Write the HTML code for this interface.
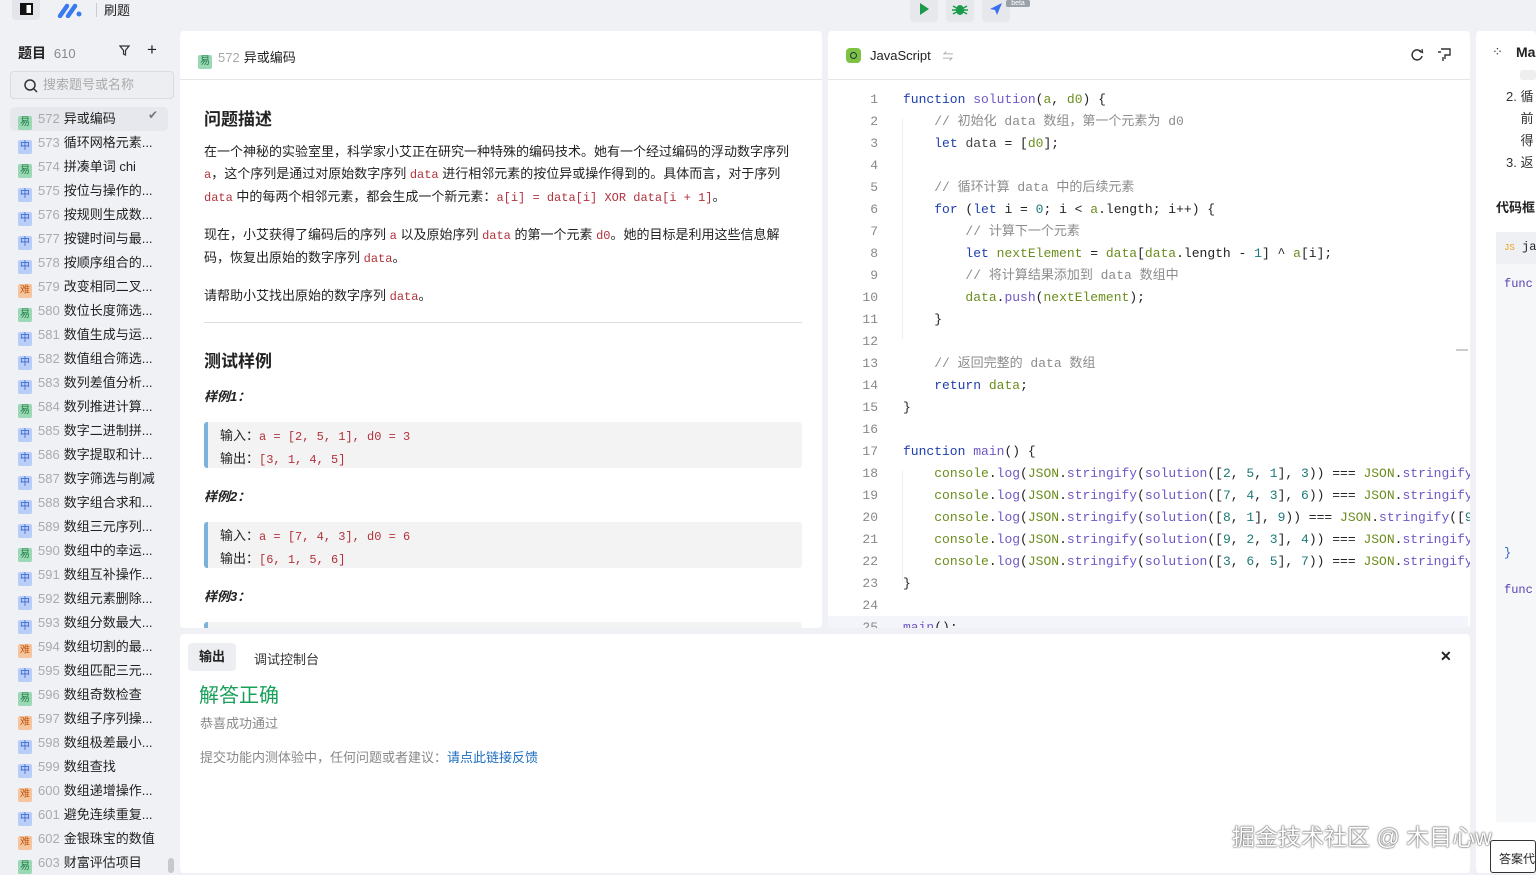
<!DOCTYPE html>
<html><head><meta charset="utf-8"><style>
*{box-sizing:border-box;margin:0;padding:0}
body{width:1536px;height:873px;overflow:hidden;background:#f0f1f5;font-family:"Liberation Sans","Noto Sans CJK SC",sans-serif;color:#222;position:relative}
.abs{position:absolute}
.mono{font-family:"Liberation Mono","Noto Sans CJK SC",monospace}
.row{position:absolute;left:10px;width:160px;height:24px;font-size:13px;line-height:24px;white-space:nowrap}
.tag{display:inline-block;width:14px;height:14px;font-size:10px;line-height:14px;text-align:center;border-radius:2px;margin:0 6px 0 8px;vertical-align:-2px}
.e{background:#9ad9b4;color:#237a4a}.m{background:#b8cdf7;color:#3463c9}.h{background:#f6c59d;color:#c05f18}
.num{color:#aaa;margin-right:4px}
.panel{background:#fff;border-radius:4px}
p.t{font-size:13px;line-height:22px;color:#222}
.r{color:#b2323c;font-family:"Liberation Mono",monospace;font-size:12px}
.ex{position:absolute;left:24px;width:598px;height:46px;background:#f3f3f3;border-left:4px solid #7ab2dc;border-radius:3px;padding:3px 0 0 12px;font-size:13px;line-height:22px}
.code .l{position:absolute;left:0;height:22px;font-size:13px;line-height:22px;white-space:pre}
.ln{position:absolute;width:50px;text-align:right;color:#888;font-size:13px;line-height:22px;font-family:"Liberation Mono",monospace}
.k{color:#1f3fae}.f{color:#7157c6}.v{color:#6b8d1d}.c{color:#8c8c8c}.n{color:#1c7a76}.s{color:#444}
</style></head><body>
<div class="abs" style="left:12px;top:0;width:28px;height:20px;background:#e3e5ea;border-radius:0 0 4px 4px"></div>
<div class="abs" style="left:20px;top:3px;width:13px;height:12px;border:2px solid #111;background:linear-gradient(90deg,#111 50%,#fff 50%)"></div>
<svg class="abs" style="left:57px;top:2px" width="28" height="16"><path d="M3 14 L10 4 M11 14 L18 4" stroke="#3a7af0" stroke-width="4.5" stroke-linecap="round"/><circle cx="22" cy="12" r="2.5" fill="#3a7af0"/></svg>
<div class="abs" style="left:96px;top:3px;width:1px;height:14px;background:#ccc"></div>
<div class="abs" style="left:104px;top:0;font-size:13px">刷题</div>
<div class="abs" style="left:910px;top:0;width:28px;height:22px;background:#e6e8ec;border-radius:0 0 4px 4px"></div>
<div class="abs" style="left:946px;top:0;width:28px;height:22px;background:#e6e8ec;border-radius:0 0 4px 4px"></div>
<div class="abs" style="left:982px;top:0;width:28px;height:22px;background:#e6e8ec;border-radius:0 0 4px 4px"></div>
<svg class="abs" style="left:918px;top:3px" width="12" height="12"><path d="M2 0 L11 6 L2 12Z" fill="#1a9a4a"/></svg>
<svg class="abs" style="left:952px;top:2px" width="16" height="14"><ellipse cx="8" cy="8" rx="4" ry="5" fill="#1a9a4a"/><path d="M1 4 L15 12 M1 12 L15 4 M0 8 H16" stroke="#1a9a4a" stroke-width="1.5"/></svg>
<svg class="abs" style="left:989px;top:2px" width="14" height="14"><path d="M1 7 L13 1 L8 13 L6 8Z" fill="#3a6ff0"/></svg>
<div class="abs" style="left:1006px;top:0;width:24px;height:7px;background:#9aa0aa;border-radius:2px;color:#fff;font-size:7px;line-height:7px;text-align:center">beta</div>

<div class="abs" style="left:18px;top:43px;font-size:14px;font-weight:bold">题目 <span style="font-weight:normal;color:#888;font-size:13px;margin-left:4px">610</span></div>
<svg class="abs" style="left:119px;top:45px" width="11" height="11"><path d="M1 1 H10 L6.5 5.5 V10 L4.5 9 V5.5Z" fill="none" stroke="#333" stroke-width="1.2"/></svg>
<div class="abs" style="left:147px;top:40px;font-size:17px">+</div>
<div class="abs" style="left:10px;top:71px;width:164px;height:28px;border:1px solid #d8dbe0;border-radius:4px;background:#eceef2;font-size:13px;color:#aaa;line-height:26px;padding-left:32px">搜索题号或名称</div>
<svg class="abs" style="left:23px;top:78px" width="16" height="16"><circle cx="7" cy="7" r="5" fill="none" stroke="#333" stroke-width="1.5"/><path d="M11 11 L14 14" stroke="#333" stroke-width="1.5"/></svg>
<div class="abs" style="left:10px;top:107px;width:158px;height:24px;background:#e6e8ed;border-radius:5px"></div>
<div class="abs" style="left:148px;top:108px;font-size:12px;color:#777">✔</div>
<div class="abs" style="left:168px;top:858px;width:6px;height:15px;background:#c8c8cc;border-radius:3px"></div>
<div id="list"></div>

<div class="abs panel" style="left:180px;top:31px;width:642px;height:597px;overflow:hidden">
 <div class="abs" style="left:0;top:0;width:642px;height:49px;border-bottom:1px solid #e6e6e6"></div>
 <div class="abs" style="left:18px;top:16px;font-size:13px"><span class="tag e" style="margin:0 6px 0 0">易</span><span class="num">572</span>异或编码</div>
 <div class="abs" style="left:24px;top:74px;font-size:17px;font-weight:bold">问题描述</div>
 <div class="abs" style="left:24px;top:110px;width:600px">
  <p class="t">在一个神秘的实验室里，科学家小艾正在研究一种特殊的编码技术。她有一个经过编码的浮动数字序列 <span class="r">a</span>，这个序列是通过对原始数字序列 <span class="r">data</span> 进行相邻元素的按位异或操作得到的。具体而言，对于序列 <span class="r">data</span> 中的每两个相邻元素，都会生成一个新元素：<span class="r">a[i] = data[i] XOR data[i + 1]</span>。</p>
  <p class="t" style="margin-top:15px">现在，小艾获得了编码后的序列 <span class="r">a</span> 以及原始序列 <span class="r">data</span> 的第一个元素 <span class="r">d0</span>。她的目标是利用这些信息解码，恢复出原始的数字序列 <span class="r">data</span>。</p>
  <p class="t" style="margin-top:15px">请帮助小艾找出原始的数字序列 <span class="r">data</span>。</p>
 </div>
 <div class="abs" style="left:24px;top:291px;width:598px;height:1px;background:#ddd"></div>
 <div class="abs" style="left:24px;top:316px;font-size:17px;font-weight:bold">测试样例</div>
 <div class="abs" style="left:24px;top:355px;font-size:13px;font-weight:bold;font-style:italic">样例1：</div>
 <div class="ex" style="top:391px">输入：<span class="r">a = [2, 5, 1], d0 = 3</span><br>输出：<span class="r">[3, 1, 4, 5]</span></div>
 <div class="abs" style="left:24px;top:455px;font-size:13px;font-weight:bold;font-style:italic">样例2：</div>
 <div class="ex" style="top:491px">输入：<span class="r">a = [7, 4, 3], d0 = 6</span><br>输出：<span class="r">[6, 1, 5, 6]</span></div>
 <div class="abs" style="left:24px;top:555px;font-size:13px;font-weight:bold;font-style:italic">样例3：</div>
 <div class="ex" style="top:591px"></div>
</div>

<div class="abs panel code" style="left:828px;top:31px;width:642px;height:597px;overflow:hidden">
 <div class="abs" style="left:0;top:0;width:642px;height:49px;border-bottom:1px solid #e6e6e6"></div>
 <div class="abs" style="left:18px;top:17px;width:15px;height:15px;border-radius:4px;background:#7dc242"></div>
 <div class="abs" style="left:22px;top:21px;width:7px;height:7px;border-radius:50%;border:1.5px solid #234"></div>
 <div class="abs" style="left:42px;top:17px;font-size:13px">JavaScript <span style="color:#999;margin-left:8px;font-size:11px">⇋</span></div>
 <svg class="abs" style="left:582px;top:17px" width="14" height="14"><path d="M11.5 4.5 A5 5 0 1 0 12 8" fill="none" stroke="#333" stroke-width="1.5"/><path d="M9 3 L12.5 4.5 L12 1" fill="none" stroke="#333" stroke-width="1.3"/></svg>
 <svg class="abs" style="left:609px;top:17px" width="15" height="14"><path d="M4 1 H13 V7 H8 V11 M4 4 H1 M6 13 V9" fill="none" stroke="#333" stroke-width="1.4"/></svg>
 <div class="abs" style="left:628px;top:318px;width:12px;height:2px;background:#ccc"></div>
 <div class="abs" style="left:0;top:585px;width:640px;height:22px;background:#f3f5fa"></div>
 <div class="abs" style="left:74px;top:88px;width:1px;height:220px;background:#eee"></div>
 <div class="abs" style="left:74px;top:440px;width:1px;height:110px;background:#eee"></div>
 <div id="code" class="mono"></div>
</div>

<div class="abs panel" style="left:1476px;top:31px;width:60px;height:842px"></div>
<div class="abs" style="left:1492px;top:44px;font-size:13px;color:#333">⁘</div>
<div class="abs" style="left:1516px;top:44px;font-size:14px;font-weight:bold">Ma</div>
<div class="abs" style="left:1520px;top:70px;width:16px;height:10px;background:#eee;border-radius:3px"></div>
<div class="abs" style="left:1506px;top:86px;font-size:13px;line-height:22px;color:#333;white-space:nowrap">2. 循<br>&nbsp;&nbsp;&nbsp; 前<br>&nbsp;&nbsp;&nbsp; 得<br>3. 返</div>
<div class="abs" style="left:1496px;top:197px;font-size:13px;font-weight:bold;white-space:nowrap">代码框</div>
<div class="abs" style="left:1496px;top:232px;width:40px;height:590px;background:#f6f7f9"></div>
<div class="abs" style="left:1496px;top:232px;width:40px;height:32px;background:#eef0f3"></div>
<div class="abs mono" style="left:1504px;top:240px;font-size:12px;white-space:nowrap"><span style="color:#e8a31a;font-size:9px">JS</span> jav</div>
<div class="abs mono" style="left:1504px;top:277px;font-size:12px;color:#5b3fb0">func</div>
<div class="abs mono" style="left:1504px;top:546px;font-size:12px;color:#3463c9">}</div>
<div class="abs mono" style="left:1504px;top:583px;font-size:12px;color:#5b3fb0">func</div>
<div class="abs" style="left:1490px;top:840px;width:46px;height:33px;border:1px solid #333;border-radius:3px;background:#fff;font-size:12px;padding:9px 0 0 8px;white-space:nowrap;overflow:hidden">答案代</div>

<div class="abs panel" style="left:180px;top:634px;width:1290px;height:239px"></div>
<div class="abs" style="left:188px;top:643px;width:48px;height:28px;background:#eceef1;border-radius:4px;font-size:13px;font-weight:bold;line-height:28px;text-align:center">输出</div>
<div class="abs" style="left:254px;top:649px;font-size:13px;color:#333">调试控制台</div>
<div class="abs" style="left:1440px;top:648px;font-size:14px;font-weight:bold">✕</div>
<div class="abs" style="left:199px;top:679px;font-size:20px;color:#18a05a">解答正确</div>
<div class="abs" style="left:200px;top:713px;font-size:13px;color:#888">恭喜成功通过</div>
<div class="abs" style="left:200px;top:747px;font-size:13px;color:#888">提交功能内测体验中，任何问题或者建议：<span style="color:#1f6fc0">请点此链接反馈</span></div>
<div class="abs" style="left:1232px;top:818px;font-size:23px;color:#fff;text-shadow:0 0 2px #555,0 0 1px #333;white-space:nowrap">掘金技术社区 @ 木目心w</div>

<script>
var items=[["e",572,"异或编码"],["m",573,"循环网格元素..."],["e",574,"拼凑单词 chi"],["m",575,"按位与操作的..."],["m",576,"按规则生成数..."],["m",577,"按键时间与最..."],["m",578,"按顺序组合的..."],["h",579,"改变相同二叉..."],["e",580,"数位长度筛选..."],["m",581,"数值生成与运..."],["m",582,"数值组合筛选..."],["m",583,"数列差值分析..."],["e",584,"数列推进计算..."],["m",585,"数字二进制拼..."],["m",586,"数字提取和计..."],["m",587,"数字筛选与削减"],["m",588,"数字组合求和..."],["m",589,"数组三元序列..."],["e",590,"数组中的幸运..."],["m",591,"数组互补操作..."],["m",592,"数组元素删除..."],["m",593,"数组分数最大..."],["h",594,"数组切割的最..."],["m",595,"数组匹配三元..."],["e",596,"数组奇数检查"],["h",597,"数组子序列操..."],["m",598,"数组极差最小..."],["m",599,"数组查找"],["h",600,"数组递增操作..."],["m",601,"避免连续重复..."],["h",602,"金银珠宝的数值"],["e",603,"财富评估项目"]];
var t={e:"易",m:"中",h:"难"},h="";
items.forEach(function(it,i){h+='<div class="row" style="top:'+(107+i*24)+'px"><span class="tag '+it[0]+'">'+t[it[0]]+'</span><span class="num">'+it[1]+'</span>'+it[2]+'</div>';});
document.getElementById('list').innerHTML=h;
var L=[
'<span class="k">function</span> <span class="f">solution</span>(<span class="v">a</span>, <span class="v">d0</span>) {',
'    <span class="c">// 初始化 data 数组，第一个元素为 d0</span>',
'    <span class="k">let</span> <span class="s">data</span> = [<span class="v">d0</span>];',
'',
'    <span class="c">// 循环计算 data 中的后续元素</span>',
'    <span class="k">for</span> (<span class="k">let</span> i = <span class="n">0</span>; i &lt; <span class="v">a</span>.length; i++) {',
'        <span class="c">// 计算下一个元素</span>',
'        <span class="k">let</span> <span class="v">nextElement</span> = <span class="v">data</span>[<span class="v">data</span>.length - <span class="n">1</span>] ^ <span class="v">a</span>[i];',
'        <span class="c">// 将计算结果添加到 data 数组中</span>',
'        <span class="v">data</span>.<span class="f">push</span>(<span class="v">nextElement</span>);',
'    }',
'',
'    <span class="c">// 返回完整的 data 数组</span>',
'    <span class="k">return</span> <span class="v">data</span>;',
'}',
'',
'<span class="k">function</span> <span class="f">main</span>() {',
'    <span class="v">console</span>.<span class="f">log</span>(<span class="v">JSON</span>.<span class="f">stringify</span>(<span class="f">solution</span>([<span class="n">2</span>, <span class="n">5</span>, <span class="n">1</span>], <span class="n">3</span>)) === <span class="v">JSON</span>.<span class="f">stringify</span>([',
'    <span class="v">console</span>.<span class="f">log</span>(<span class="v">JSON</span>.<span class="f">stringify</span>(<span class="f">solution</span>([<span class="n">7</span>, <span class="n">4</span>, <span class="n">3</span>], <span class="n">6</span>)) === <span class="v">JSON</span>.<span class="f">stringify</span>([',
'    <span class="v">console</span>.<span class="f">log</span>(<span class="v">JSON</span>.<span class="f">stringify</span>(<span class="f">solution</span>([<span class="n">8</span>, <span class="n">1</span>], <span class="n">9</span>)) === <span class="v">JSON</span>.<span class="f">stringify</span>([<span class="n">9</span>',
'    <span class="v">console</span>.<span class="f">log</span>(<span class="v">JSON</span>.<span class="f">stringify</span>(<span class="f">solution</span>([<span class="n">9</span>, <span class="n">2</span>, <span class="n">3</span>], <span class="n">4</span>)) === <span class="v">JSON</span>.<span class="f">stringify</span>([',
'    <span class="v">console</span>.<span class="f">log</span>(<span class="v">JSON</span>.<span class="f">stringify</span>(<span class="f">solution</span>([<span class="n">3</span>, <span class="n">6</span>, <span class="n">5</span>], <span class="n">7</span>)) === <span class="v">JSON</span>.<span class="f">stringify</span>([',
'}',
'',
'<span class="f">main</span>();'];
var c="";
L.forEach(function(s,i){var y=58+i*22;c+='<div class="ln" style="left:0;top:'+y+'px">'+(i+1)+'</div><div class="l" style="left:75px;top:'+y+'px">'+s+'</div>';});
document.getElementById('code').innerHTML=c;
</script>
</body></html>
